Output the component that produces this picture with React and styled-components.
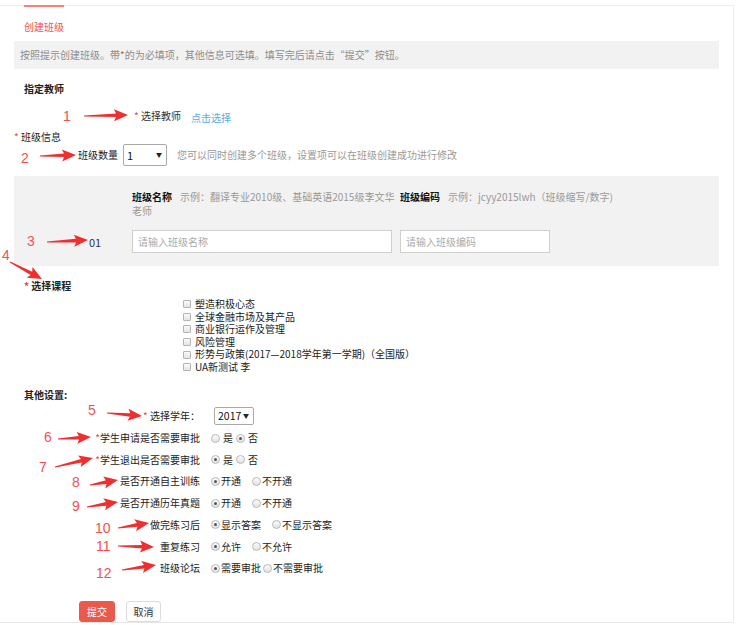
import React from "react";
import styled, { createGlobalStyle } from "styled-components";

const GlobalStyle = createGlobalStyle`
  body {
    margin: 0;
    background: #fff;
    font-family: "Noto Sans CJK SC", "Noto Sans", sans-serif;
    color: #333;
  }
`;

const courses = [
  "塑造积极心态",
  "全球金融市场及其产品",
  "商业银行运作及管理",
  "风险管理",
  "形势与政策(2017—2018学年第一学期)（全国版）",
  "UA新测试 李",
];

const settings = [
  { label: "学生申请是否需要审批", star: true, spaced: true, options: ["是", "否"], checked: 1 },
  { label: "学生退出是否需要审批", star: true, spaced: true, options: ["是", "否"], checked: 0 },
  { label: "是否开通自主训练", options: ["开通", "不开通"], checked: 0 },
  { label: "是否开通历年真题", options: ["开通", "不开通"], checked: 0 },
  { label: "做完练习后", options: ["显示答案", "不显示答案"], checked: 0 },
  { label: "重复练习", options: ["允许", "不允许"], checked: 0 },
  { label: "班级论坛", options: ["需要审批", "不需要审批"], checked: 0, tight: true },
];

// red hand-drawn annotations laid over the form
const marks = [
  { n: "1", x: 63, y: 121, a: [84, 116, 128, 115] },
  { n: "2", x: 21, y: 163, a: [40, 156, 76, 155] },
  { n: "3", x: 27, y: 246, a: [47, 242, 88, 240] },
  { n: "4", x: 2, y: 260, a: [10, 262, 42, 279] },
  { n: "5", x: 88, y: 415, a: [107, 413, 142, 416] },
  { n: "6", x: 44, y: 442, a: [58, 439, 91, 437] },
  { n: "7", x: 39, y: 472, a: [55, 467, 93, 458] },
  { n: "8", x: 72, y: 487, a: [90, 485, 118, 480] },
  { n: "9", x: 72, y: 511, a: [87, 507, 118, 502] },
  { n: "10", x: 95, y: 533, a: [118, 528, 149, 523] },
  { n: "11", x: 96, y: 551, a: [118, 546, 154, 547] },
  { n: "12", x: 96, y: 578, a: [122, 570, 156, 565] },
];

function arrowPoints([x1, y1, x2, y2]) {
  const dx = x2 - x1;
  const dy = y2 - y1;
  const len = Math.hypot(dx, dy);
  const ux = dx / len;
  const uy = dy / len;
  const nx = -uy;
  const ny = ux;
  const bx = x2 - ux * 14;
  const by = y2 - uy * 14;
  const p = (x, y, k) => `${(x + nx * k).toFixed(1)},${(y + ny * k).toFixed(1)}`;
  return [
    p(x1, y1, 0.4),
    p(bx + ux * 2, by + uy * 2, 1.8),
    p(bx, by, 6),
    `${x2},${y2}`,
    p(bx, by, -6),
    p(bx + ux * 2, by + uy * 2, -1.8),
    p(x1, y1, -0.4),
  ].join(" ");
}

function Annotations() {
  return (
    <Overlay width="737" height="625" viewBox="0 0 737 625">
      {marks.map((m) => (
        <g key={m.n}>
          <text x={m.x} y={m.y} fontSize="14" fill="#f5504e" fontFamily="Liberation Sans, sans-serif">
            {m.n}
          </text>
          <polygon points={arrowPoints(m.a)} fill="#ef2f2f" />
        </g>
      ))}
    </Overlay>
  );
}

function Radio({ checked }) {
  return <RadioDot $checked={checked} />;
}

export default function App() {
  return (
    <Page>
      <GlobalStyle />
      <Panel>
        <TabBar>
          <Tab>创建班级</Tab>
        </TabBar>
        <InfoBar>
          按照提示创建班级。带<Star>*</Star>的为必填项，其他信息可选填。填写完后请点击“提交”按钮。
        </InfoBar>

        <SectionTitle $top={13}>指定教师</SectionTitle>
        <TeacherRow>
          <Star>*</Star>&nbsp;选择教师
          <Link>点击选择</Link>
        </TeacherRow>

        <GroupTitle>
          <Star>*</Star>&nbsp;班级信息
        </GroupTitle>
        <CountRow>
          <CountLabel>班级数量</CountLabel>
          <SelectBox $w={44} $h={22}>
            1<Caret>▼</Caret>
          </SelectBox>
          <Hint>您可以同时创建多个班级，设置项可以在班级创建成功进行修改</Hint>
        </CountRow>

        <ClassBox>
          <span />
          <FieldHead>
            <b>班级名称</b>
            <Example>
              示例：翻译专业2010级、基础英语2015级李文华
              <br />
              老师
            </Example>
          </FieldHead>
          <FieldHead>
            <b>班级编码</b>
            <Example>示例：jcyy2015lwh（班级缩写/数字)</Example>
          </FieldHead>
          <RowNo>01</RowNo>
          <TextInput placeholder="请输入班级名称" />
          <TextInput placeholder="请输入班级编码" />
        </ClassBox>

        <SectionTitle $top={13}>
          <Star>*</Star> 选择课程
        </SectionTitle>
        <CourseList>
          {courses.map((c) => (
            <Course key={c}>
              <CheckBox />
              {c}
            </Course>
          ))}
        </CourseList>

        <SectionTitle $top={14}>其他设置:</SectionTitle>
        <SettingsGrid>
          <SettingLabel>
            <Star>*</Star> 选择学年：
          </SettingLabel>
          <SettingControl>
            <SelectBox $w={40} $h={18} $ml={3} $fs={10.5}>
              2017<Caret>▼</Caret>
            </SelectBox>
          </SettingControl>
          {settings.map((s) => (
            <React.Fragment key={s.label}>
              <SettingLabel>
                {s.star && <Star>*</Star>}
                {s.label}
              </SettingLabel>
              <SettingControl>
                {s.options.map((o, i) => (
                  <Choice key={o} $spaced={s.spaced} $gap={s.tight ? 2 : s.spaced ? 3 : 11}>
                    <Radio checked={i === s.checked} />
                    {o}
                  </Choice>
                ))}
              </SettingControl>
            </React.Fragment>
          ))}
        </SettingsGrid>

        <Actions>
          <Button $primary>提交</Button>
          <Button>取消</Button>
        </Actions>
      </Panel>
      <Annotations />
    </Page>
  );
}

const Page = styled.div`
  position: relative;
  width: 737px;
  height: 625px;
  overflow: hidden;
  font-size: 10px;
`;

const Panel = styled.div`
  box-sizing: border-box;
  margin-top: 5px;
  width: 734px;
  height: 618px;
  border-top: 1px solid #ededed;
  border-right: 1px solid #ededed;
  border-bottom: 1px solid #e6e6e6;
`;

const Overlay = styled.svg`
  position: absolute;
  left: 0;
  top: 0;
  pointer-events: none;
`;

const TabBar = styled.div`
  height: 35px;
  padding-left: 24px;
`;

const Tab = styled.div`
  display: inline-block;
  margin-top: -1px;
  padding-top: 13px;
  border-top: 2px solid #f4847a;
  color: #f0564d;
  line-height: 14px;
`;

const InfoBar = styled.div`
  margin: 0 14px;
  padding-left: 6px;
  height: 28px;
  line-height: 28px;
  background: #f2f2f2;
  color: #8d8d8d;
`;

const Star = styled.span`
  color: #f0433a;
`;

const SectionTitle = styled.div`
  margin-top: ${(p) => p.$top}px;
  padding-left: 24px;
  line-height: 14px;
  font-weight: 700;
  color: #222;
`;

const TeacherRow = styled.div`
  margin-top: 12px;
  padding-left: 134px;
  display: flex;
  align-items: center;
  height: 16px;
  line-height: 14px;
  color: #333;
`;

const Link = styled.span`
  margin-left: 10px;
  padding-top: 3px;
  color: #5aaae8;
`;

const GroupTitle = styled.div`
  margin-top: 6px;
  padding-left: 14px;
  line-height: 14px;
  color: #222;
`;

const CountRow = styled.div`
  display: flex;
  align-items: center;
  height: 22px;
  line-height: 14px;
  padding-left: 78px;
`;

const CountLabel = styled.span`
  color: #222;
`;

const SelectBox = styled.div`
  box-sizing: border-box;
  display: flex;
  align-items: center;
  justify-content: space-between;
  width: ${(p) => p.$w}px;
  height: ${(p) => p.$h}px;
  margin-left: ${(p) => p.$ml ?? 5}px;
  padding: 0 4px 0 3px;
  border: 1px solid #a9a9a9;
  border-radius: 2px;
  background: #fff;
  font-size: ${(p) => p.$fs ?? 11}px;
  line-height: 14px;
  color: #111;
`;

const Caret = styled.span`
  font-size: 6px;
  color: #222;
`;

const Hint = styled.span`
  margin-left: 10px;
  color: #999;
`;

const ClassBox = styled.div`
  margin: 10px 14px 0;
  padding: 14px 0 13px;
  background: #f2f2f2;
  display: grid;
  grid-template-columns: 110px 260px 150px;
  grid-template-rows: 28px 23px;
  column-gap: 8px;
  row-gap: 12px;
`;

const FieldHead = styled.div`
  line-height: 14px;
  white-space: nowrap;
  b {
    color: #111;
    margin-right: 8px;
  }
`;

const Example = styled.span`
  color: #999;
`;

const RowNo = styled.div`
  align-self: center;
  padding-left: 75px;
  font-size: 11px;
  line-height: 14px;
  color: #2e3350;
`;

const TextInput = styled.input`
  box-sizing: border-box;
  width: 100%;
  height: 23px;
  margin: 0;
  padding: 0 5px;
  border: 1px solid #cfcfcf;
  background: #fff;
  font-family: inherit;
  font-size: 10px;
  outline: none;
  &::placeholder {
    color: #aaa;
  }
`;

const CourseList = styled.div`
  margin-top: 5px;
  padding-left: 182px;
`;

const Course = styled.div`
  display: flex;
  align-items: center;
  height: 12.6px;
  line-height: 12.6px;
  color: #222;
  white-space: nowrap;
`;

const CheckBox = styled.span`
  box-sizing: border-box;
  width: 8px;
  height: 8px;
  margin: 0 4px 0 1px;
  border: 1px solid #b4b4b4;
  border-radius: 1px;
  background: linear-gradient(#fafafa, #e4e4e4);
`;

const SettingsGrid = styled.div`
  margin-top: 4px;
  display: grid;
  grid-template-columns: 200px 1fr;
  grid-auto-rows: 21.7px;
  column-gap: 11px;
  align-items: center;
  line-height: 14px;
`;

const SettingLabel = styled.div`
  text-align: right;
  white-space: nowrap;
  color: #222;
`;

const SettingControl = styled.div`
  display: flex;
  align-items: center;
  color: #222;
  white-space: nowrap;
`;

const Choice = styled.label`
  display: flex;
  align-items: center;
  margin-right: ${(p) => p.$gap}px;
  span {
    margin-right: ${(p) => (p.$spaced ? 3 : 1)}px;
  }
`;

const RadioDot = styled.span`
  box-sizing: border-box;
  display: flex;
  align-items: center;
  justify-content: center;
  width: 9px;
  height: 9px;
  border: 1px solid #b8b8b8;
  border-radius: 50%;
  background: linear-gradient(#fbfbfb, #e2e2e2);
  &::after {
    content: "";
    width: 3px;
    height: 3px;
    border-radius: 50%;
    background: ${(p) => (p.$checked ? "#555" : "transparent")};
  }
`;

const Actions = styled.div`
  margin-top: 22px;
  padding-left: 79px;
  display: flex;
  gap: 11px;
`;

const Button = styled.button`
  box-sizing: border-box;
  width: ${(p) => (p.$primary ? 36 : 35)}px;
  height: 21px;
  padding: 0;
  border: 1px solid ${(p) => (p.$primary ? "#e9594c" : "#dcdcdc")};
  border-radius: 3px;
  background: ${(p) => (p.$primary ? "#e9594c" : "#fff")};
  color: ${(p) => (p.$primary ? "#fff" : "#333")};
  font-family: inherit;
  font-size: 10px;
`;
